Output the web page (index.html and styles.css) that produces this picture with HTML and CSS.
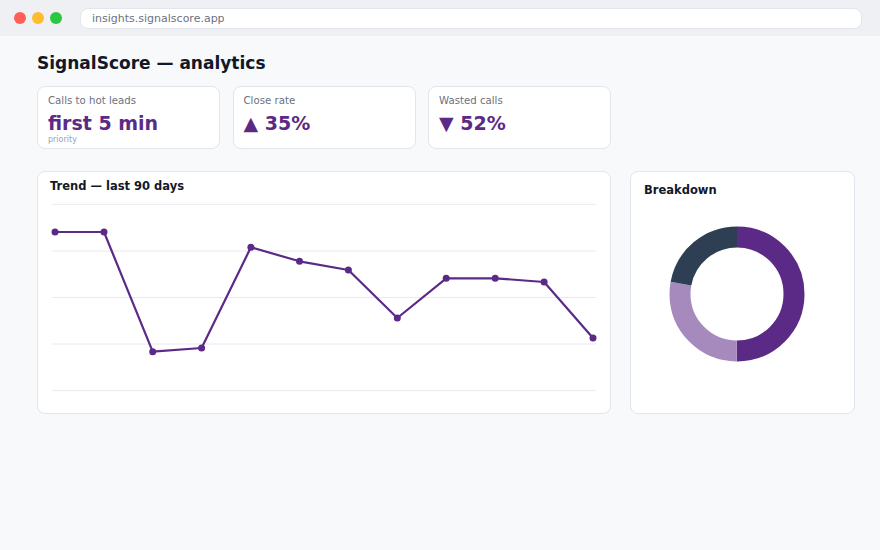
FILE: index.html
```html
<!DOCTYPE html>
<html>
<head>
    <title>SignalScore — analytics</title>
    <link rel="stylesheet" href="styles.css">
</head>
<body>

<!-- Window chrome -->
<div class="browser-bar">
    <span class="dot dot-red"></span>
    <span class="dot dot-yellow"></span>
    <span class="dot dot-green"></span>
    <div class="url-bar">insights.signalscore.app</div>
</div>

<div class="page">
    <h1 class="page-title">SignalScore — analytics</h1>

    <!-- KPI cards -->
    <div class="kpi-row">
        <div class="card kpi">
            <div class="kpi-label">Calls to hot leads</div>
            <div class="kpi-value">first 5 min</div>
            <div class="kpi-note">priority</div>
        </div>
        <div class="card kpi">
            <div class="kpi-label">Close rate</div>
            <div class="kpi-value">▲ 35%</div>
        </div>
        <div class="card kpi">
            <div class="kpi-label">Wasted calls</div>
            <div class="kpi-value">▼ 52%</div>
        </div>
    </div>

    <!-- Charts -->
    <div class="chart-row">
        <div class="card trend-card">
            <div class="card-title">Trend — last 90 days</div>
            <svg class="trend-chart" width="548" height="204" viewBox="0 0 548 204">
                <g class="grid">
                    <line x1="2" y1="8.3" x2="546" y2="8.3" />
                    <line x1="2" y1="55" x2="546" y2="55" />
                    <line x1="2" y1="101.5" x2="546" y2="101.5" />
                    <line x1="2" y1="148" x2="546" y2="148" />
                    <line x1="2" y1="194.7" x2="546" y2="194.7" />
                </g>
                <polyline class="trend-line" points="5,36 54,36 102.7,155.7 151.6,152 200.9,51.3 249.5,65.3 298.4,74 347.3,122 396.2,82.3 445.2,82.3 494.1,86 543,142" />
                <g class="trend-dots">
                    <circle cx="5" cy="36" r="3.5" />
                    <circle cx="54" cy="36" r="3.5" />
                    <circle cx="102.7" cy="155.7" r="3.5" />
                    <circle cx="151.6" cy="152" r="3.5" />
                    <circle cx="200.9" cy="51.3" r="3.5" />
                    <circle cx="249.5" cy="65.3" r="3.5" />
                    <circle cx="298.4" cy="74" r="3.5" />
                    <circle cx="347.3" cy="122" r="3.5" />
                    <circle cx="396.2" cy="82.3" r="3.5" />
                    <circle cx="445.2" cy="82.3" r="3.5" />
                    <circle cx="494.1" cy="86" r="3.5" />
                    <circle cx="543" cy="142" r="3.5" />
                </g>
            </svg>
        </div>

        <div class="card breakdown-card">
            <div class="card-title">Breakdown</div>
            <!-- donut: 50 / 28 / 22 -->
            <svg class="donut" width="186" height="186" viewBox="0 0 186 186">
                <g transform="rotate(-90 93 93)" fill="none" stroke-width="21">
                    <circle cx="93" cy="93" r="57" stroke="#5b2a86" stroke-dasharray="179.07 358.14" />
                    <circle cx="93" cy="93" r="57" stroke="#a68abd" stroke-dasharray="99.5 358.14" stroke-dashoffset="-179.07" />
                    <circle cx="93" cy="93" r="57" stroke="#2e3f53" stroke-dasharray="79.57 358.14" stroke-dashoffset="-278.57" />
                </g>
            </svg>
        </div>
    </div>
</div>

</body>
</html>
```

FILE: styles.css
```css
body {
    margin: 0;
    font-family: "DejaVu Sans", Verdana, sans-serif;
    background-color: #f8f9fb;
    color: #111827;
}

.browser-bar {
    display: flex;
    align-items: center;
    height: 36px;
    padding: 0 18px 0 14px;
    background-color: #eff0f4;
}

.dot {
    width: 12px;
    height: 12px;
    border-radius: 50%;
    margin-right: 6px;
}

.dot-red { background-color: #ff5f57; }
.dot-yellow { background-color: #febc2e; }
.dot-green { background-color: #28c840; }

.url-bar {
    flex: 1;
    margin-left: 12px;
    height: 21px;
    line-height: 19px;
    padding: 0 11px;
    border-radius: 8px;
    border: 1px solid #e3e6ec;
    background-color: #fff;
    font-size: 11px;
    color: #6b7280;
    box-sizing: border-box;
}

.page {
    padding: 16px 25px 0 37px;
}

.page-title {
    margin: 0;
    font-size: 17px;
    line-height: 22px;
    font-weight: bold;
}

.card {
    background-color: #fff;
    border: 1px solid #e0e5ee;
    border-radius: 8px;
    box-sizing: border-box;
}

.kpi-row {
    display: grid;
    grid-template-columns: repeat(3, 1fr);
    column-gap: 12.5px;
    width: 574px;
    margin-top: 12px;
}

.kpi {
    height: 63px;
    padding: 7px 10px 0 10px;
}

.kpi-label {
    font-size: 10.2px;
    line-height: 13px;
    color: #6b7280;
}

.kpi-value {
    margin-top: 4px;
    font-size: 19px;
    line-height: 24px;
    font-weight: bold;
    color: #5b2a86;
}

.kpi-note {
    margin-top: -1px;
    font-size: 8px;
    line-height: 11px;
    color: #9ca3af;
}

.chart-row {
    display: grid;
    grid-template-columns: 574px 225px;
    column-gap: 19px;
    margin-top: 22px;
}

.card-title {
    font-size: 11.5px;
    line-height: 16px;
    font-weight: bold;
}

.trend-card {
    height: 243px;
    padding: 6px 12px 0 12px;
}

.trend-chart {
    display: block;
    margin-top: 2px;
}

.grid line {
    stroke: #e6eaf1;
    stroke-width: 1;
}

.trend-line {
    fill: none;
    stroke: #5b2a86;
    stroke-width: 2.2;
    stroke-linejoin: round;
}

.trend-dots circle {
    fill: #5b2a86;
}

.breakdown-card {
    height: 243px;
    padding: 10px 13px 0 13px;
}

.donut {
    display: block;
    margin-top: 2.5px;
}
```
